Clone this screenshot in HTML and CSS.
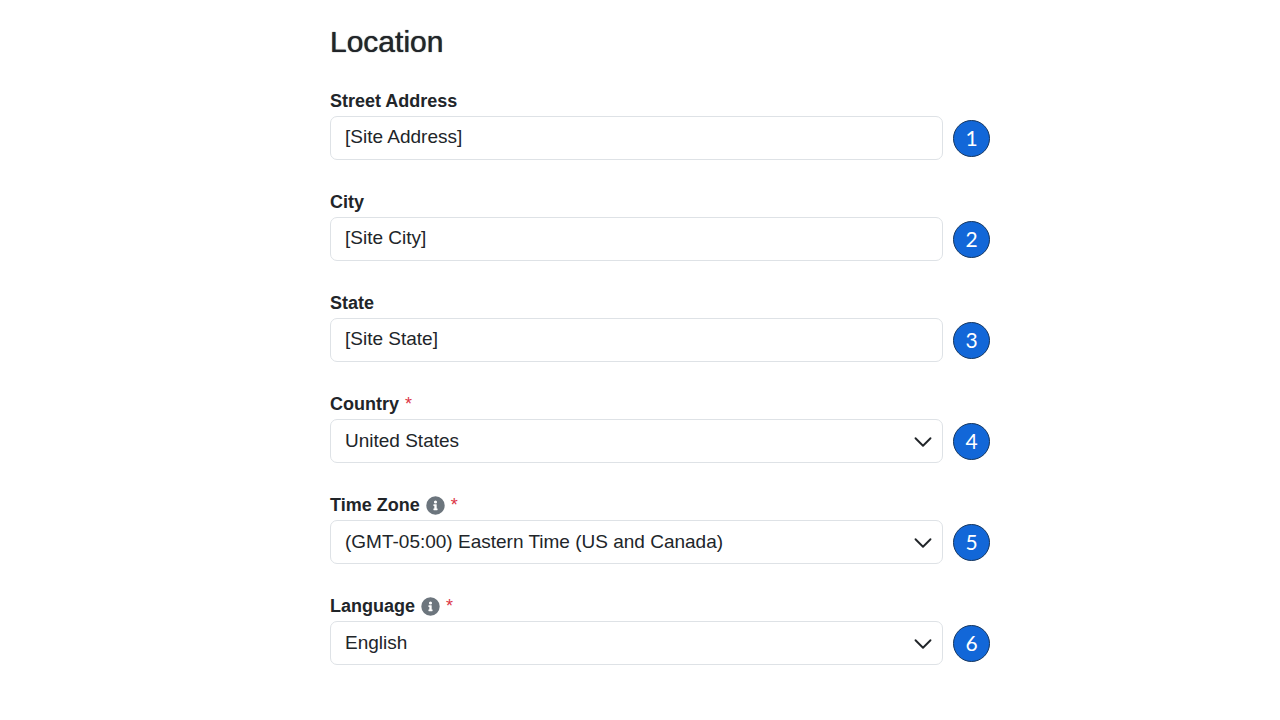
FILE: index.html
```html
<!DOCTYPE html>
<html lang="en">

<head>
    <meta charset="utf-8">
    <meta name="viewport" content="width=device-width, initial-scale=1.0">
    <title>Location</title>
    <link rel="stylesheet" href="styles.css">
</head>

<body>
    <svg class="symbols" aria-hidden="true">
        <symbol id="info" viewBox="0 0 512 512">
            <path fill-rule="evenodd" d="M256 8a248 248 0 1 0 0 496a248 248 0 0 0 0-496zm0 110a42 42 0 1 1 0 84a42 42 0 0 1 0-84zm56 254c0 7-5 12-12 12h-88c-7 0-12-5-12-12v-24c0-7 5-12 12-12h12v-64h-12c-7 0-12-5-12-12v-24c0-7 5-12 12-12h64c7 0 12 5 12 12v100h12c7 0 12 5 12 12z" />
        </symbol>
        <symbol id="chevron" viewBox="0 0 16 16">
            <path d="M2 5l6 6 6-6" fill="none" stroke="#212529" stroke-width="1.5" stroke-linecap="round" stroke-linejoin="round" />
        </symbol>
    </svg>

    <main>
        <h1>Location</h1>
        <form>
            <div class="field">
                <div class="label"><label for="street">Street Address</label></div>
                <input class="control" id="street" type="text" value="[Site Address]">
                <span class="badge">1</span>
            </div>
            <div class="field">
                <div class="label"><label for="city">City</label></div>
                <input class="control" id="city" type="text" value="[Site City]">
                <span class="badge">2</span>
            </div>
            <div class="field">
                <div class="label"><label for="state">State</label></div>
                <input class="control" id="state" type="text" value="[Site State]">
                <span class="badge">3</span>
            </div>
            <div class="field">
                <div class="label"><label for="country">Country</label><span class="required">*</span></div>
                <div class="select">
                    <select class="control" id="country" required>
                        <option>United States</option>
                    </select>
                    <svg class="chevron"><use href="#chevron" /></svg>
                </div>
                <span class="badge">4</span>
            </div>
            <div class="field">
                <div class="label"><label for="timezone">Time Zone</label><svg class="info"><use href="#info" /></svg><span class="required">*</span></div>
                <div class="select">
                    <select class="control" id="timezone" required>
                        <option>(GMT-05:00) Eastern Time (US and Canada)</option>
                    </select>
                    <svg class="chevron"><use href="#chevron" /></svg>
                </div>
                <span class="badge">5</span>
            </div>
            <div class="field">
                <div class="label"><label for="language">Language</label><svg class="info"><use href="#info" /></svg><span class="required">*</span></div>
                <div class="select">
                    <select class="control" id="language" required>
                        <option>English</option>
                    </select>
                    <svg class="chevron"><use href="#chevron" /></svg>
                </div>
                <span class="badge">6</span>
            </div>
        </form>
    </main>
</body>

</html>
```

FILE: styles.css
```css
* {
    box-sizing: border-box;
}

body {
    margin: 0;
    background-color: white;
    color: #212529;
    font-family: "Liberation Sans", Arial, sans-serif;
    font-size: 19px;
}

.symbols {
    display: none;
}

main {
    max-width: 700px;
    margin: 0 auto;
    padding: 25px 0 25px 40px;
}

h1 {
    margin: 0 0 31px;
    font-size: 30px;
    font-weight: normal;
    line-height: 34px;
    text-shadow: 0 0 1px #212529;
}

form {
    display: grid;
    gap: 31px;
}

.field {
    display: grid;
    grid-template-columns: minmax(0, 1fr) 37px;
    align-items: center;
    gap: 4px 10px;
}

.label {
    grid-column: 1 / -1;
    display: flex;
    align-items: center;
    gap: 6px;
    font-size: 18px;
    font-weight: bold;
    line-height: 22px;
}

.required {
    color: #dc3545;
    font-weight: normal;
}

.info {
    width: 19px;
    height: 19px;
    fill: #6c757d;
}

.control {
    display: block;
    width: 100%;
    height: 44px;
    padding: 0 14px 2px;
    border: 1px solid #dee2e6;
    border-radius: 7px;
    background-color: white;
    color: #212529;
    font: inherit;
    appearance: none;
}

.select {
    position: relative;
}

.chevron {
    position: absolute;
    top: 13px;
    right: 10px;
    width: 20px;
    height: 20px;
    pointer-events: none;
}

.badge {
    height: 37px;
    border: 1px solid #15365f;
    border-radius: 50%;
    background-color: #1267d8;
    color: white;
    font-family: Lato, sans-serif;
    font-size: 21px;
    line-height: 34px;
    text-align: center;
}
```
